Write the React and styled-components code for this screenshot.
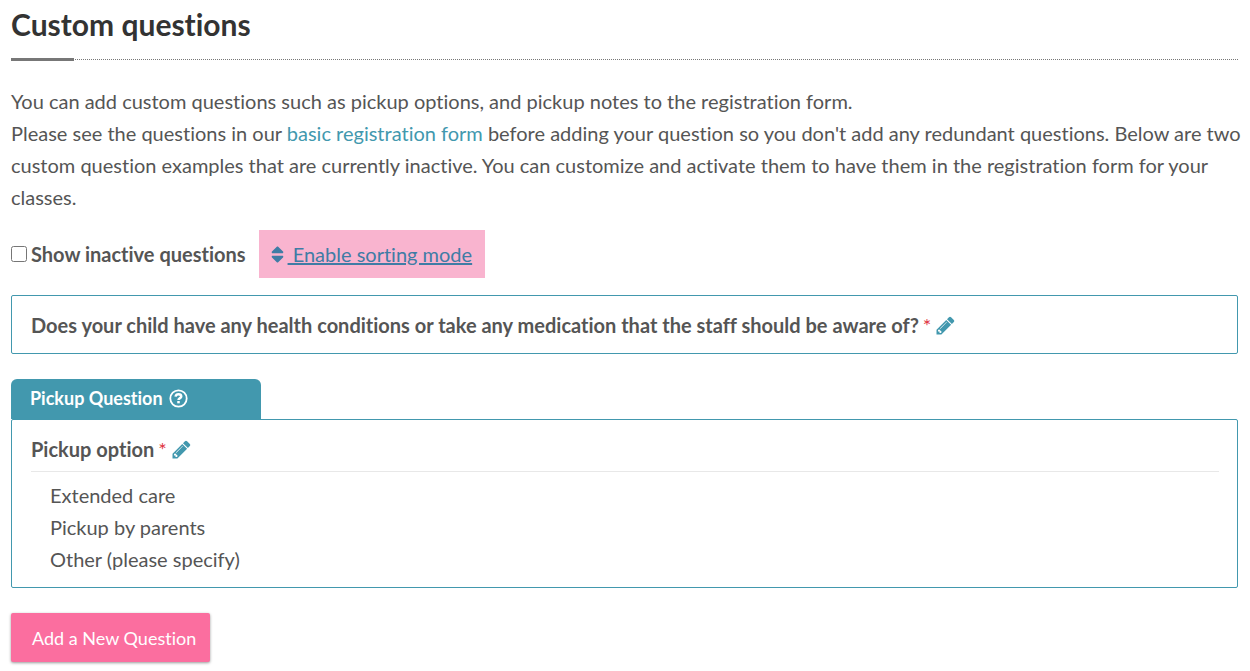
import React, { useState } from "react";
import styled, { createGlobalStyle } from "styled-components";
import { FaSort } from "react-icons/fa";

const GlobalStyle = createGlobalStyle`
  * {
    box-sizing: border-box;
  }

  body {
    margin: 0;
    background: #fff;
    color: #555;
    font-family: Lato, sans-serif;
    font-size: 20px;
    font-variant-ligatures: none;
    line-height: 32px;
  }
`;

const Page = styled.main`
  padding: 4px 12px 8px 11px;
`;

const Title = styled.h1`
  margin: 0 0 25px;
  padding-bottom: 14px;
  border-bottom: 1px dotted #777;
  color: #333;
  font-size: 30px;
  font-weight: 700;
  line-height: 41px;
  position: relative;

  &::after {
    content: "";
    position: absolute;
    left: 0;
    bottom: -2px;
    width: 63px;
    height: 3px;
    background: #777;
  }
`;

const Intro = styled.p`
  margin: 0 -12px 17px 0;
`;

const TextLink = styled.a`
  color: #4298ae;
  text-decoration: none;
`;

const Toolbar = styled.div`
  display: flex;
  align-items: center;
  gap: 13px;
  margin-bottom: 17px;
`;

const CheckLabel = styled.label`
  display: flex;
  align-items: center;
  gap: 4px;
  font-weight: 700;
`;

const Checkbox = styled.input`
  width: 16px;
  height: 16px;
  margin: 0;
`;

const SortButton = styled.button`
  display: flex;
  align-items: center;
  height: 48px;
  padding: 0 13px 0 12px;
  border: 0;
  background: #f9b4cf;
  color: #3f7ca5;
  font: inherit;
  text-decoration: underline;
  white-space: pre;
  cursor: pointer;
`;

const SortIcon = styled(FaSort)`
  width: 13px;
  height: 21px;
  margin-right: 4px;
`;

const Panel = styled.section`
  padding: 13px 18px 12px 19px;
  border: 1px solid #4298ae;
  border-radius: 2px;
`;

const Question = styled.h2`
  display: flex;
  align-items: center;
  margin: 0;
  font-size: 20px;
  font-weight: 700;
  line-height: 32px;
`;

const Required = styled.span`
  margin-left: 4px;
  color: #e0343f;
  font-weight: 400;
`;

const EditButton = styled.button`
  display: flex;
  margin-left: 4px;
  padding: 0;
  border: 0;
  background: none;
  color: #4298ae;
  cursor: pointer;
`;

const Icon = styled.svg`
  width: 21px;
  height: 21px;
  fill: currentColor;
`;

const Group = styled.div`
  margin: 25px 0;
`;

const GroupTab = styled.div`
  display: flex;
  align-items: center;
  gap: 5px;
  width: 250px;
  height: 40px;
  padding: 0 0 2px 19px;
  border-radius: 6px 6px 0 0;
  background: #4298ae;
  color: #fff;
  font-size: 18px;
  font-weight: 700;
`;

const OptionList = styled.ul`
  margin: 6px 0 0;
  padding: 7px 19px 0;
  border-top: 1px solid #e8e8e8;
  list-style: none;
`;

const AddButton = styled.button`
  height: 49px;
  padding: 0 14px 0 21px;
  border: 0;
  border-radius: 2px;
  background: #fb6e9f;
  box-shadow: 0 1px 3px rgba(0, 0, 0, 0.4);
  color: #fff;
  font: inherit;
  font-size: 18px;
  cursor: pointer;
`;

const options = ["Extended care", "Pickup by parents", "Other (please specify)"];

function PencilIcon() {
  return (
    <Icon viewBox="0 0 1792 1792" aria-hidden="true">
      <path d="M491 1536l91-91-235-235-91 91v107h128v128h107zm523-928q0-22-22-22-10 0-17 7l-542 542q-7 7-7 17 0 22 22 22 10 0 17-7l542-542q7-7 7-17zm-54-192l416 416-832 832h-416v-416zm683 96q0 53-37 90l-166 166-416-416 166-165q36-38 90-38 53 0 91 38l235 234q37 39 37 91z" />
    </Icon>
  );
}

function HelpIcon() {
  return (
    <Icon viewBox="0 0 20 20" aria-hidden="true">
      <circle cx="10" cy="10" r="7.8" fill="none" stroke="currentColor" strokeWidth="1.7" />
      <path
        d="M7.2 8.2C7.5 6.6 8.6 6 10 6C11.7 6 12.6 6.9 12.6 8C12.6 9.7 10 9.5 10 11.5"
        fill="none"
        stroke="currentColor"
        strokeWidth="2.4"
      />
      <rect x="8.8" y="12.4" width="2.4" height="2.2" />
    </Icon>
  );
}

function QuestionTitle({ text }) {
  return (
    <Question>
      {text}
      <Required>*</Required>
      <EditButton type="button" aria-label="Edit question">
        <PencilIcon />
      </EditButton>
    </Question>
  );
}

function App() {
  const [showInactive, setShowInactive] = useState(false);

  return (
    <Page>
      <GlobalStyle />
      <Title>Custom questions</Title>
      <Intro>
        You can add custom questions such as pickup options, and pickup notes to
        the registration form.
        <br />
        Please see the questions in our{" "}
        <TextLink href="#registration">basic registration form</TextLink> before
        adding your question so you don't add any redundant questions. Below are
        two custom question examples that are currently inactive. You can
        customize and activate them to have them in the registration form for
        your classes.
      </Intro>
      <Toolbar>
        <CheckLabel>
          <Checkbox
            type="checkbox"
            checked={showInactive}
            onChange={(e) => setShowInactive(e.target.checked)}
          />
          Show inactive questions
        </CheckLabel>
        <SortButton type="button">
          <SortIcon />
          {" Enable sorting mode"}
        </SortButton>
      </Toolbar>
      <Panel>
        <QuestionTitle text="Does your child have any health conditions or take any medication that the staff should be aware of?" />
      </Panel>
      <Group>
        <GroupTab>
          Pickup Question
          <HelpIcon />
        </GroupTab>
        <Panel>
          <QuestionTitle text="Pickup option" />
          <OptionList>
            {options.map((option) => (
              <li key={option}>{option}</li>
            ))}
          </OptionList>
        </Panel>
      </Group>
      <AddButton type="button">Add a New Question</AddButton>
    </Page>
  );
}

export default App;
